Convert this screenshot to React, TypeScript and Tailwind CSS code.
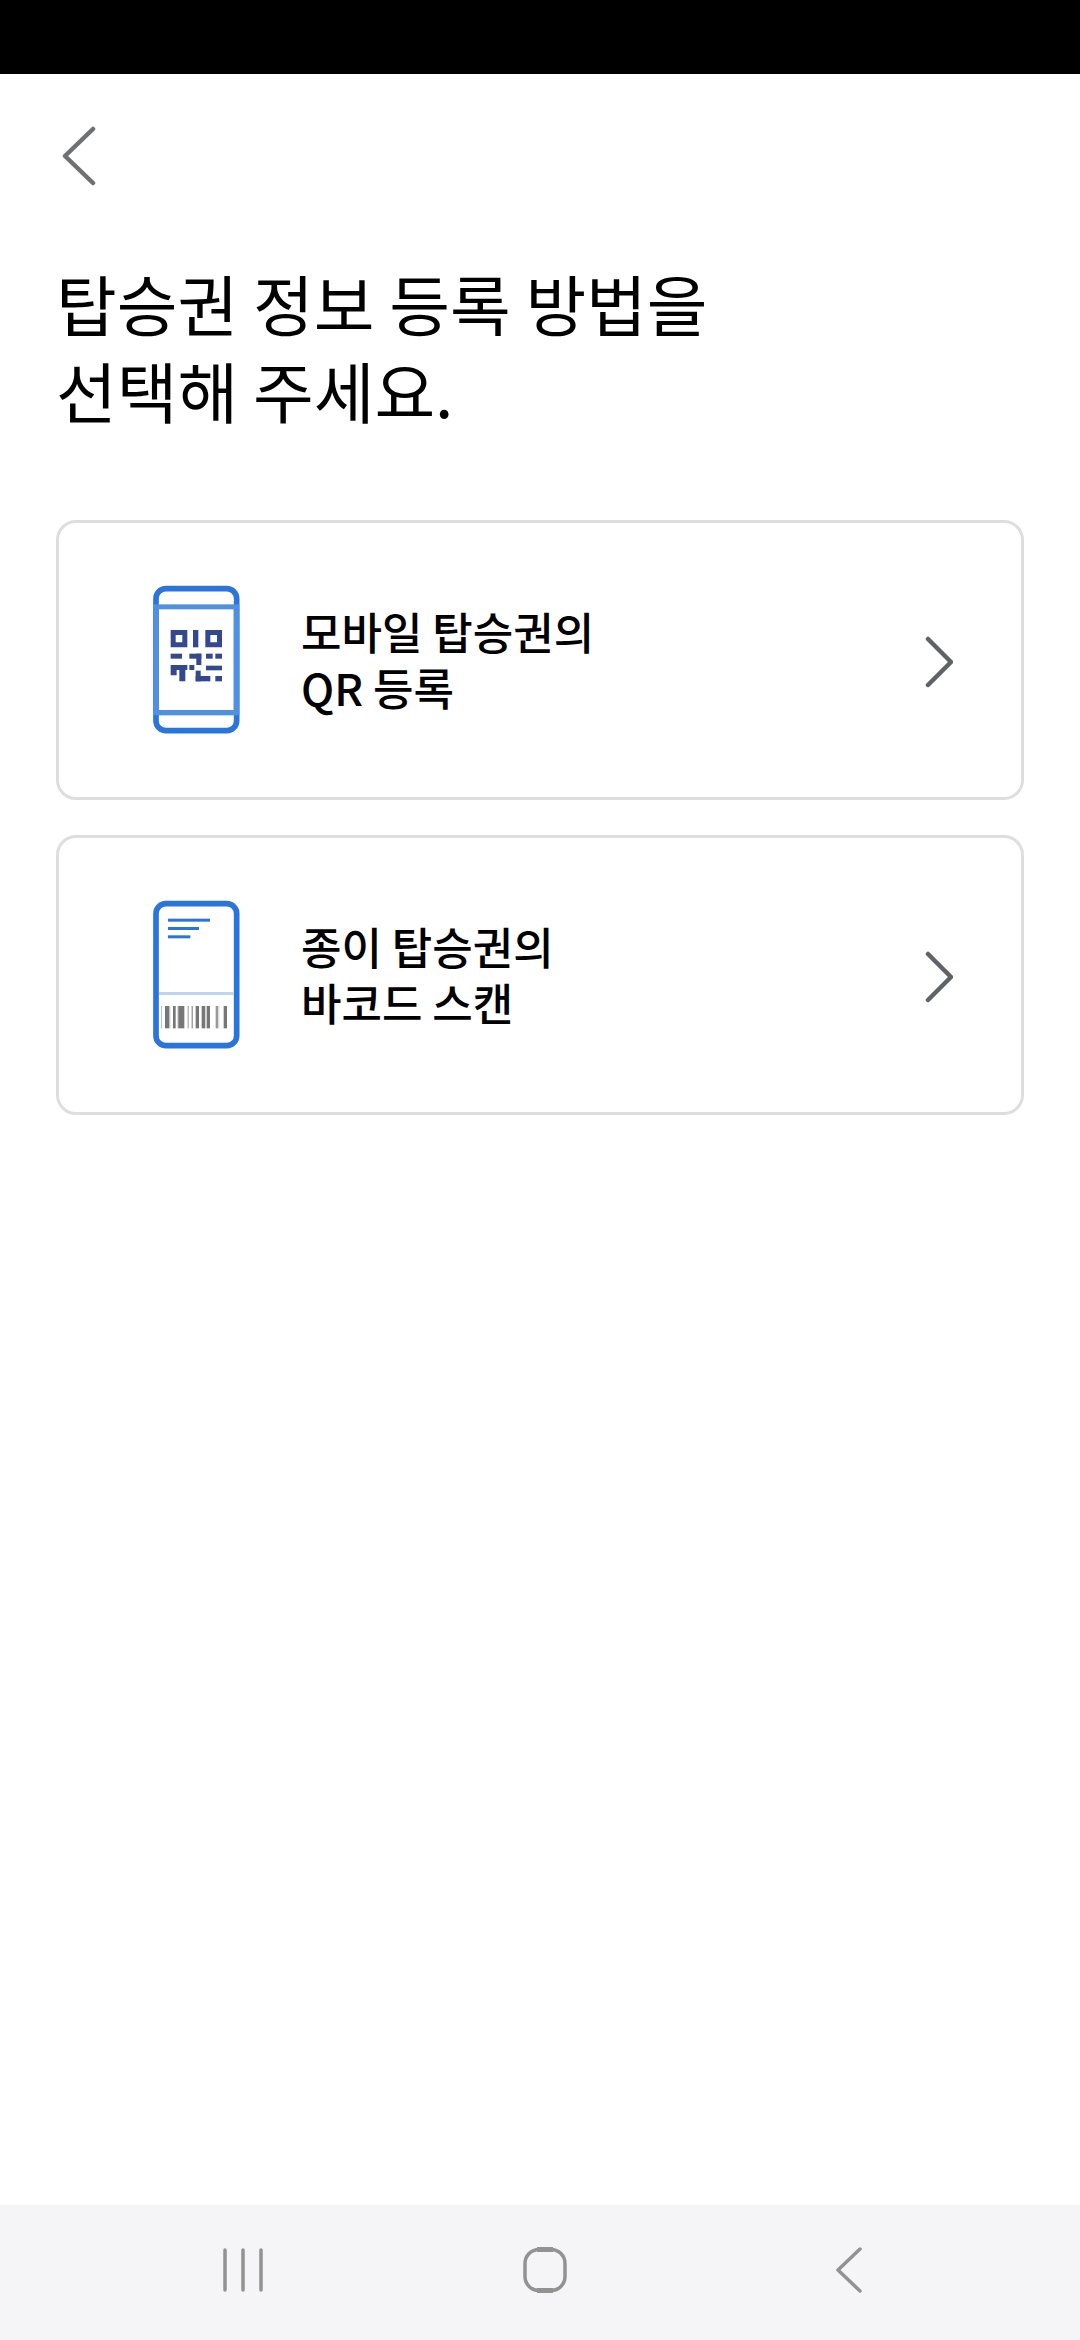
import React from "react";

const font = { fontFamily: '"Noto Sans CJK KR", "Noto Sans", sans-serif' };

const PhoneFrame = () => (
  <rect x="78" y="56" width="242" height="426" rx="30" fill="none" stroke="#2a74dc" strokeWidth="17" />
);

const QrPhoneIcon = () => (
  <svg width="130" height="170" viewBox="0 0 390 510" className="shrink-0 -mt-[10px]">
    <PhoneFrame />
    <rect x="70" y="103" width="258" height="15" fill="#4f91e0" />
    <rect x="70" y="420" width="258" height="16" fill="#4f91e0" />
    <rect x="70" y="118" width="17" height="302" fill="#4f91e0" />
    <rect x="311" y="118" width="17" height="302" fill="#4f91e0" />
    <g fill="#33488f">
      <path fillRule="evenodd" d="M122 180h50v52h-50zM137 195v22h20v-22z" />
      <rect x="189" y="180" width="16" height="52" />
      <path fillRule="evenodd" d="M226 180h50v52h-50zM241 195v22h20v-22z" />
      <rect x="122" y="251" width="34" height="15" />
      <rect x="178" y="251" width="36" height="15" />
      <rect x="199" y="251" width="15" height="34" />
      <rect x="228" y="251" width="20" height="15" />
      <rect x="256" y="251" width="20" height="15" />
      <path d="M122 285h50v15h-6v34h-18v-34h-8v16h-18z" />
      <rect x="178" y="285" width="15" height="15" />
      <rect x="197" y="302" width="15" height="32" />
      <rect x="197" y="318" width="44" height="16" />
      <rect x="228" y="287" width="48" height="14" />
      <rect x="256" y="318" width="20" height="16" />
    </g>
  </svg>
);

const barcode: [number, number, string][] = [
  [93, 3, "#c4c4c4"], [105, 12, "#777"], [117, 4, "#c4c4c4"], [129, 8, "#777"], [143, 4, "#999"],
  [147, 16, "#777"], [173, 3, "#999"], [185, 3, "#777"], [197, 10, "#777"], [215, 10, "#777"],
  [225, 2, "#c4c4c4"], [230, 10, "#777"], [257, 8, "#999"], [265, 3, "#ddd"], [281, 10, "#777"],
];

const PaperPhoneIcon = () => (
  <svg width="130" height="170" viewBox="0 0 390 510" className="shrink-0 -mt-[10px]">
    <PhoneFrame />
    <rect x="87" y="321" width="224" height="9" fill="#bcd5f0" />
    <rect x="114" y="101" width="126" height="9" fill="#2a74dc" />
    <rect x="114" y="126" width="93" height="9" fill="#2a74dc" />
    <rect x="114" y="151" width="67" height="9" fill="#2a74dc" />
    {barcode.map(([x, w, c]) => (
      <rect key={x} x={x} y="363" width={w} height="67" fill={c} />
    ))}
  </svg>
);

const OptionCard = ({ icon, lines }: { icon: React.ReactNode; lines: string[] }) => (
  <div className="h-[280px] flex items-center rounded-[20px] border-[3px] border-[#dedede] bg-white pl-[71px] pr-[68px]">
    {icon}
    <div className="ml-[41px] flex-1 text-[44px] leading-[56px] font-medium text-black -mt-[2px]">
      {lines.map((l) => (
        <div key={l}>{l}</div>
      ))}
    </div>
    <svg width="30" height="52" viewBox="0 0 30 52" fill="none" className="shrink-0 mt-[3px]">
      <path d="M5 3 L28 26 L5 49" stroke="#5f6368" strokeWidth="4.5" strokeLinecap="round" strokeLinejoin="round" />
    </svg>
  </div>
);

export default function App() {
  return (
    <div className="w-[1080px] h-[2340px] flex flex-col bg-white overflow-hidden" style={font}>
      <div className="h-[74px] bg-black shrink-0" />

      <div className="h-[111px] pt-[52px] pl-[62px] shrink-0">
        <svg width="34" height="60" viewBox="0 0 34 60" fill="none">
          <path d="M31 3 L3 30 L31 57" stroke="#6f7072" strokeWidth="4.5" strokeLinecap="round" strokeLinejoin="round" />
        </svg>
      </div>

      <h1 className="mt-[74px] px-14 text-[66px] leading-[87px] font-normal text-black">
        탑승권 정보 등록 방법을
        <br />
        선택해 주세요.
      </h1>

      <div className="mt-[87px] mx-14 flex flex-col gap-[35px]">
        <OptionCard icon={<QrPhoneIcon />} lines={["모바일 탑승권의", "QR 등록"]} />
        <OptionCard icon={<PaperPhoneIcon />} lines={["종이 탑승권의", "바코드 스캔"]} />
      </div>

      <div className="flex-1" />

      <div className="h-[135px] bg-[#f5f5f7] shrink-0 flex items-center pl-[223px]">
        <svg width="42" height="44" viewBox="0 0 42 44" fill="none" className="-mt-[6px]">
          <path d="M2 2V42M20 2V42M38 2V42" stroke="#929292" strokeWidth="3.5" strokeLinecap="round" />
        </svg>
        <svg width="44" height="46" viewBox="0 0 44 46" fill="none" className="-mt-[6px] ml-[258px]">
          <rect x="2" y="2.5" width="40" height="41" rx="14" stroke="#929292" strokeWidth="3.5" />
          <path d="M14 2.5H30M14 43.5H30" stroke="#929292" strokeWidth="5" />
        </svg>
        <svg width="26" height="46" viewBox="0 0 26 46" fill="none" className="-mt-[6px] ml-[269px]">
          <path d="M24 2 L2 23 L24 44" stroke="#929292" strokeWidth="3.5" strokeLinecap="round" strokeLinejoin="round" />
        </svg>
      </div>
    </div>
  );
}
